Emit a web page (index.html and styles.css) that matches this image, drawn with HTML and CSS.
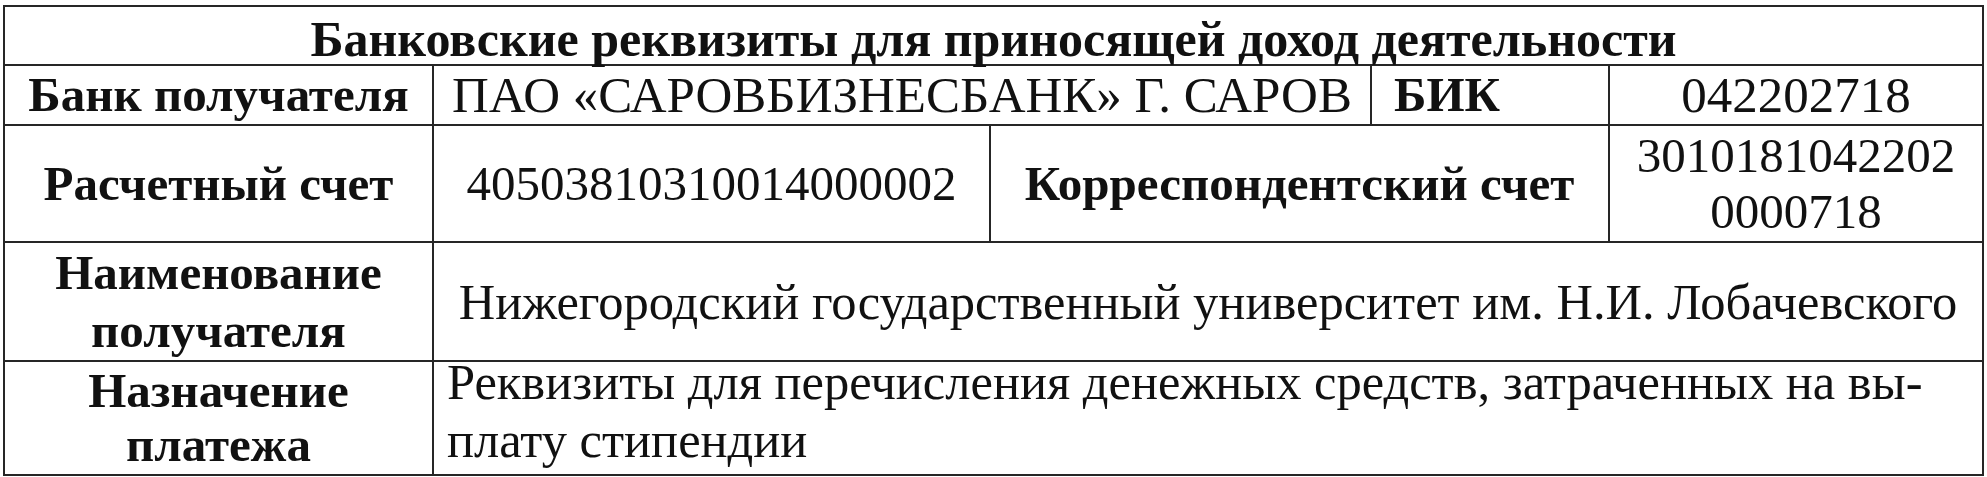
FILE: index.html
```html
<!DOCTYPE html>
<html lang="ru">
<head>
<meta charset="utf-8">
<title>Банковские реквизиты</title>
<link rel="stylesheet" href="styles.css">
</head>
<body>
<table class="req">
  <colgroup>
    <col class="c1"><col class="c2"><col class="c3"><col class="c4"><col class="c5">
  </colgroup>
  <tr class="r1">
    <th colspan="5" class="title">Банковские реквизиты для приносящей доход деятельности</th>
  </tr>
  <tr class="r2">
    <th class="lbl">Банк получателя</th>
    <td colspan="2" class="val">ПАО «САРОВБИЗНЕСБАНК» Г. САРОВ</td>
    <th class="lbl left">БИК</th>
    <td class="val">042202718</td>
  </tr>
  <tr class="r3">
    <th class="lbl">Расчетный счет</th>
    <td class="val narrow">40503810310014000002</td>
    <th colspan="2" class="lbl">Корреспондентский счет</th>
    <td class="val narrow tight">3010181042202<br>0000718</td>
  </tr>
  <tr class="r4">
    <th class="lbl two">Наименование<br>получателя</th>
    <td colspan="4" class="val name">Нижегородский государственный университет им. Н.И. Лобачевского</td>
  </tr>
  <tr class="r5">
    <th class="lbl three">Назначение<br>платежа</th>
    <td colspan="4" class="val purpose"><div class="purpose-text">Реквизиты для перечисления денежных средств, затраченных на вы-<br>плату стипендии</div></td>
  </tr>
</table>
</body>
</html>
```
FILE: styles.css
```css
html, body {
  margin: 0;
  padding: 0;
  background: #ffffff;
}

body {
  padding: 5px 0 0 3px;
  font-family: "Liberation Serif", "Times New Roman", serif;
  color: #111111;
}

.req {
  border-collapse: collapse;
  table-layout: fixed;
  width: 1979px;
}

.c1 { width: 429px; }
.c2 { width: 557px; }
.c3 { width: 381px; }
.c4 { width: 238px; }
.c5 { width: 374px; }

.req th,
.req td {
  border: 2px solid #262626;
  padding: 0;
  font-size: 51px;
  line-height: 50px;
  text-align: center;
  vertical-align: middle;
}

.req th {
  font-weight: bold;
  font-size: 49px;
}

.r1 { height: 59px; }
.r2 { height: 60px; }
.r3 { height: 117px; }
.r4 { height: 119px; }
.r5 { height: 114px; }

.req .title {
  font-size: 50px;
  vertical-align: bottom;
  line-height: 50px;
  padding-bottom: 0;
}

.req .left {
  text-align: left;
  padding-left: 22px;
}

.req .two {
  line-height: 58px;
}

.req .three {
  line-height: 54px;
}

.req .val {
  font-weight: normal;
}

.req .narrow {
  font-size: 49px;
}

.req .name {
  font-size: 50.5px;
}

.req .tight {
  line-height: 56px;
}

.req .purpose {
  text-align: left;
  vertical-align: top;
  padding-left: 13px;
  font-size: 50.5px;
  line-height: 58px;
}

.purpose-text {
  margin-top: -9px;
  height: 100px;
}
```
